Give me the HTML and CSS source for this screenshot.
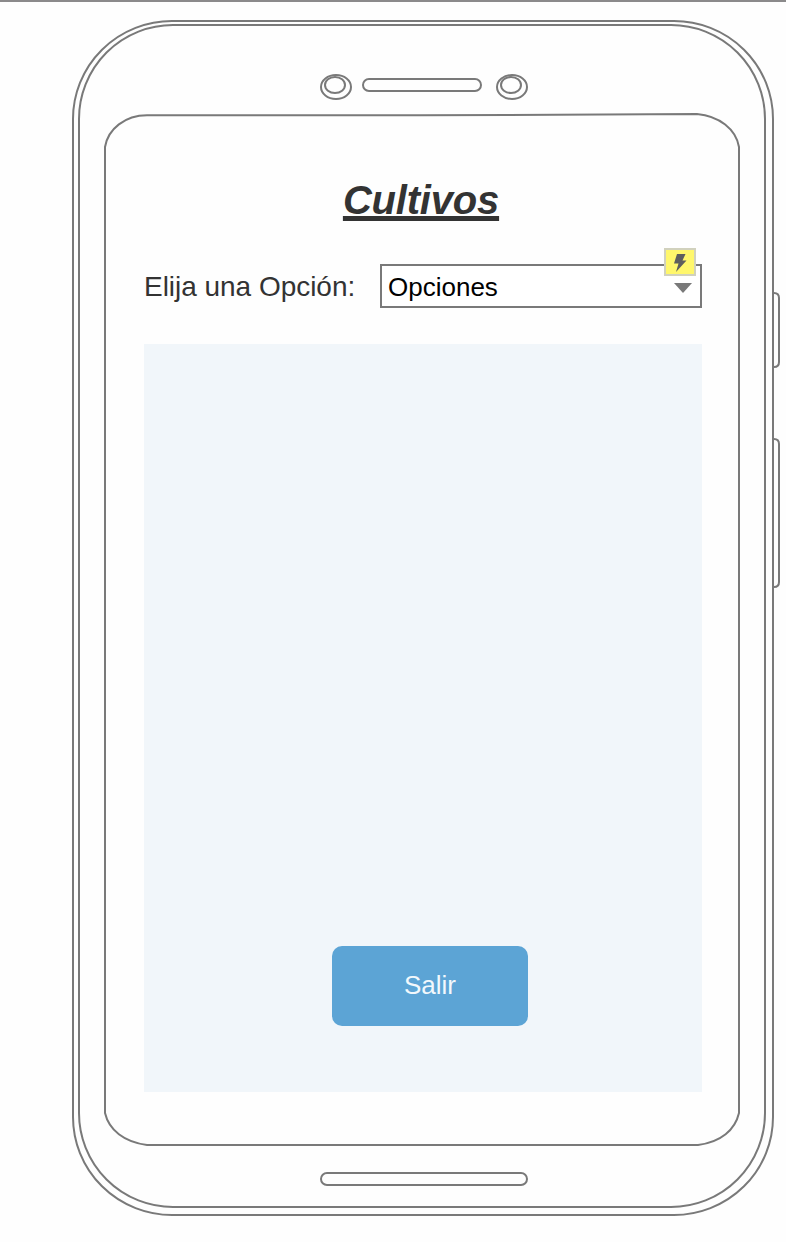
FILE: index.html
```html
<!DOCTYPE html>
<html lang="es">
<head>
<meta charset="utf-8">
<title>Cultivos</title>
<link rel="stylesheet" href="styles.css">
</head>
<body>
<main class="canvas">
  <svg class="phone" viewBox="0 0 786 1242" aria-hidden="true">
    <rect x="73" y="21" width="700" height="1194" rx="99" ry="98"/>
    <rect x="79" y="25" width="686" height="1182" rx="94" ry="94"/>
    <path d="M105 147C108 129 125 115.3 147 115.3L420 115.3L697 114C719 116 736 129 739 147V1113C735 1130 721 1142 698 1145H147C124 1142 109 1130 105 1113Z"/>
    <ellipse cx="336" cy="87" rx="15" ry="12"/>
    <ellipse cx="335" cy="85" rx="10" ry="8"/>
    <rect x="363" y="79" width="118" height="12" rx="6"/>
    <ellipse cx="512" cy="87" rx="15" ry="12"/>
    <ellipse cx="511" cy="85" rx="10" ry="8"/>
    <rect x="321" y="1173" width="206" height="12" rx="6"/>
    <path d="M773 293H774Q779 293 779 298V362Q779 367 774 367H773M773 439H774Q779 439 779 444V582Q779 587 774 587H773"/>
  </svg>
  <section class="screen">
    <h1 class="title">Cultivos</h1>
    <div class="field">
      <span class="label">Elija una Opción:</span>
      <div class="select">
        <span>Opciones</span>
        <svg class="arrow" width="18" height="10" viewBox="0 0 18 10"><path d="M0 0H18L9 10Z"/></svg>
        <span class="badge">
          <svg width="14" height="18" viewBox="0 0 14 18"><path d="M4 0H12.5L9.5 6.5H13.5L3 18L5.5 9.5H1Z"/></svg>
        </span>
      </div>
    </div>
    <div class="panel">
      <button class="exit" type="button">Salir</button>
    </div>
  </section>
</main>
</body>
</html>
```
FILE: styles.css
```css
* { box-sizing: border-box; }
body {
  margin: 0;
  background: #fefefe;
  font-family: "Liberation Sans", Arial, sans-serif;
  color: #333;
}
.canvas {
  position: relative;
  width: 786px;
  height: 1242px;
  border-top: 2px solid #8b8a8b;
  overflow: hidden;
}
/* Device outline drawn behind the screen content */
.phone {
  position: absolute;
  top: -2px;
  left: 0;
  width: 786px;
  height: 1242px;
  fill: none;
  stroke: #797979;
  stroke-width: 2;
}
.screen {
  position: relative;
  display: flex;
  flex-direction: column;
  width: 558px;
  margin-left: 144px;
  padding-top: 175px;
}
.title {
  align-self: center;
  margin: 0 4px 0 0;
  height: 46px;
  font-size: 40px;
  letter-spacing: -0.2px;
  line-height: 46px;
  font-style: italic;
  text-decoration: underline;
  text-decoration-thickness: 5px;
  text-decoration-skip-ink: none;
  text-underline-offset: 2px;
}
.field {
  display: flex;
  align-items: center;
  justify-content: space-between;
  height: 44px;
  margin-top: 41px;
}
.label {
  padding-top: 2px;
  font-size: 28px;
  letter-spacing: -0.03px;
  line-height: 44px;
  white-space: nowrap;
}
.select {
  position: relative;
  display: flex;
  align-items: center;
  justify-content: space-between;
  width: 322px;
  height: 44px;
  padding: 2px 8px 0 6px;
  border: 2px solid #797979;
  background: #fff;
  color: #000;
  font-size: 26px;
}
.arrow { margin-top: 2px; fill: #797979; }
.badge {
  position: absolute;
  top: -18px;
  right: 4px;
  display: flex;
  align-items: center;
  justify-content: center;
  width: 32px;
  height: 28px;
  padding-top: 1px;
  border: 2px solid #d1d1bd;
  background: #fff76b;
}
.badge svg { fill: #5e5e5e; }
.panel {
  display: flex;
  align-items: flex-end;
  justify-content: center;
  height: 748px;
  margin-top: 36px;
  padding: 0 0 66px 14px;
  background: #f1f6fa;
}
.exit {
  width: 196px;
  height: 80px;
  padding: 0 0 2px;
  border: 0;
  border-radius: 10px;
  background: #5ca4d5;
  color: #f2f8fc;
  font: 26px "Liberation Sans", Arial, sans-serif;
}
```
